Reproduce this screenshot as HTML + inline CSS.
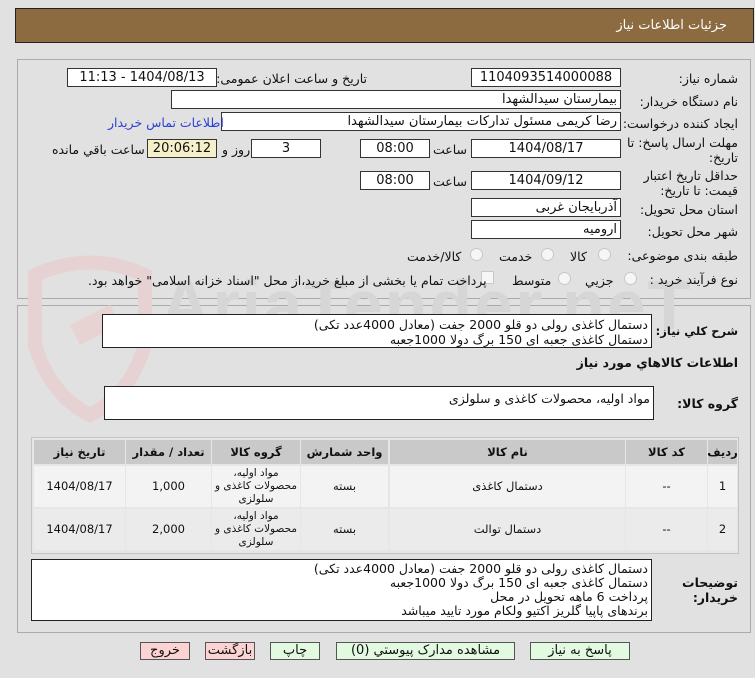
<!DOCTYPE html>
<html dir="rtl"><head><meta charset="utf-8">
<style>
*{box-sizing:border-box;margin:0;padding:0}
body{width:755px;height:678px;background:#e1e1e1;font-family:"DejaVu Sans","Liberation Sans",sans-serif;font-size:12px;color:#111;position:relative;overflow:hidden}
.a{position:absolute;white-space:nowrap}
.box{position:absolute;background:#fff;border:1px solid #333;height:19px;line-height:17px;text-align:center;font-size:13px}
.lbl{position:absolute;white-space:nowrap;font-size:12.5px;text-align:right}
.rad{position:absolute;width:13px;height:13px;border-radius:50%;border:1px solid #c8c8c8;background:#f6f6f6}
.btn{position:absolute;top:642px;height:18px;border:1px solid #555;font-size:13px;text-align:center;line-height:16px}
.c{position:absolute;display:flex;align-items:center;justify-content:center;text-align:center;font-size:11.5px;line-height:13px;background:#f3f3f3}
.h{background:#c9c9c9;font-weight:bold;font-size:11.5px}
.g{font-size:10.5px;line-height:13px}
.ta{position:absolute;background:#fff;border:1px solid #222;font-size:12.5px;padding:2px 3px;line-height:15px;text-align:right}
</style></head><body>
<div class="a" style="left:15px;top:8px;width:739px;height:35px;background:#8b6b3f;border:1px solid #222"></div>
<div class="a" style="right:28px;top:18px;color:#fff;font-size:13px">جزئیات اطلاعات نیاز</div>

<div class="a" style="left:17px;top:59px;width:734px;height:240px;border:1px solid #aaa"></div>
<div class="a" style="left:17px;top:305px;width:734px;height:328px;border:1px solid #aaa"></div>

<svg class="a" style="left:20px;top:245px" width="140" height="200" viewBox="0 0 140 200"><path d="M15 30 Q70 5 125 30 L125 100 Q110 150 70 170 Q30 150 15 100 Z" fill="none" stroke="#e6d2d2" stroke-width="14"/><path d="M50 80 L90 60 L100 80 L60 100 Z" fill="#e8d3d3"/></svg>
<div class="a" style="left:160px;top:265px;font-size:70px;font-weight:bold;color:#d6d6d6;direction:ltr;letter-spacing:2px;font-family:'Liberation Sans',sans-serif">AriaTender.neT</div>

<div class="lbl" style="right:17px;top:71px">شماره نیاز:</div>
<div class="box" style="left:471px;top:68px;width:150px">1104093514000088</div>
<div class="lbl" style="right:388px;top:71px">تاریخ و ساعت اعلان عمومی:</div>
<div class="box" style="left:67px;top:68px;width:150px">1404/08/13 - 11:13</div>

<div class="lbl" style="right:17px;top:94px">نام دستگاه خریدار:</div>
<div class="box" style="left:171px;top:90px;width:450px;text-align:right;padding-right:3px">بیمارستان سیدالشهدا</div>

<div class="lbl" style="right:17px;top:116px">ایجاد کننده درخواست:</div>
<div class="box" style="left:221px;top:112px;width:400px;text-align:right;padding-right:3px">رضا کریمی مسئول تدارکات بیمارستان سیدالشهدا</div>
<div class="lbl" style="left:108px;top:115px;color:#2b3fd6">اطلاعات تماس خریدار</div>

<div class="lbl" style="right:17px;top:135px;line-height:15px">مهلت ارسال پاسخ: تا<br>تاریخ:</div>
<div class="box" style="left:471px;top:139px;width:150px">1404/08/17</div>
<div class="lbl" style="left:433px;top:142px">ساعت</div>
<div class="box" style="left:360px;top:139px;width:70px">08:00</div>
<div class="box" style="left:251px;top:139px;width:70px">3</div>
<div class="lbl" style="left:222px;top:142px">روز و</div>
<div class="box" style="left:147px;top:139px;width:70px;background:#f5f0c8">20:06:12</div>
<div class="lbl" style="left:52px;top:142px">ساعت باقي مانده</div>

<div class="lbl" style="right:17px;top:168px;line-height:15px">حداقل تاریخ اعتبار<br>قیمت: تا تاریخ:</div>
<div class="box" style="left:471px;top:171px;width:150px">1404/09/12</div>
<div class="lbl" style="left:433px;top:174px">ساعت</div>
<div class="box" style="left:360px;top:171px;width:70px">08:00</div>

<div class="lbl" style="right:17px;top:202px">استان محل تحویل:</div>
<div class="box" style="left:471px;top:198px;width:150px;text-align:right;padding-right:3px">آذربایجان غربی</div>
<div class="lbl" style="right:17px;top:224px">شهر محل تحویل:</div>
<div class="box" style="left:471px;top:220px;width:150px;text-align:right;padding-right:3px">ارومیه</div>

<div class="lbl" style="right:17px;top:248px">طبقه بندی موضوعی:</div>
<div class="rad" style="left:598px;top:248px"></div><div class="lbl" style="left:570px;top:249px">کالا</div>
<div class="rad" style="left:541px;top:248px"></div><div class="lbl" style="left:499px;top:249px">خدمت</div>
<div class="rad" style="left:470px;top:248px"></div><div class="lbl" style="left:407px;top:249px">کالا/خدمت</div>

<div class="lbl" style="right:17px;top:272px">نوع فرآیند خرید :</div>
<div class="rad" style="left:624px;top:272px"></div><div class="lbl" style="left:585px;top:273px">جزیي</div>
<div class="rad" style="left:558px;top:272px"></div><div class="lbl" style="left:512px;top:273px">متوسط</div>
<div class="a" style="left:481px;top:271px;width:13px;height:13px;border:1px solid #c8c8c8;background:#f6f6f6"></div>
<div class="lbl" style="left:88px;top:273px">پرداخت تمام یا بخشی از مبلغ خرید،از محل "اسناد خزانه اسلامی" خواهد بود.</div>

<div class="lbl" style="right:17px;top:324px;font-weight:bold;font-size:11.5px">شرح کلي نياز:</div>
<div class="ta" style="left:102px;top:314px;width:550px;height:34px">دستمال کاغذی رولی دو قلو 2000 جفت (معادل 4000عدد تکی)<br>دستمال کاغذی جعبه ای 150 برگ دولا 1000جعبه</div>
<div class="lbl" style="right:17px;top:355px;font-weight:bold">اطلاعات کالاهاي مورد نياز</div>
<div class="lbl" style="right:17px;top:396px;font-weight:bold">گروه کالا:</div>
<div class="ta" style="left:104px;top:386px;width:550px;height:34px;padding-top:4px">مواد اولیه، محصولات کاغذی و سلولزی</div>

<div class="a" style="left:31px;top:437px;width:708px;height:117px;border:1px solid #c4c4c4;background:#e6e6e6"></div>
<div class="c h" style="left:708px;top:440px;width:29px;height:24px">رديف</div>
<div class="c h" style="left:626px;top:440px;width:81px;height:24px">کد کالا</div>
<div class="c h" style="left:390px;top:440px;width:235px;height:24px">نام کالا</div>
<div class="c h" style="left:301px;top:440px;width:87px;height:24px">واحد شمارش</div>
<div class="c h" style="left:212px;top:440px;width:88px;height:24px">گروه کالا</div>
<div class="c h" style="left:126px;top:440px;width:85px;height:24px">تعداد / مقدار</div>
<div class="c h" style="left:34px;top:440px;width:91px;height:24px">تاريخ نياز</div>
<div class="c" style="left:708px;top:466px;width:29px;height:41px">1</div>
<div class="c" style="left:626px;top:466px;width:81px;height:41px">--</div>
<div class="c" style="left:390px;top:466px;width:235px;height:41px">دستمال کاغذی</div>
<div class="c" style="left:301px;top:466px;width:87px;height:41px">بسته</div>
<div class="c g" style="left:212px;top:466px;width:88px;height:41px">مواد اولیه،<br>محصولات کاغذی و<br>سلولزی</div>
<div class="c" style="left:126px;top:466px;width:85px;height:41px">1,000</div>
<div class="c" style="left:34px;top:466px;width:91px;height:41px">1404/08/17</div>
<div class="c" style="left:708px;top:509px;width:29px;height:41px;background:#ebebeb">2</div>
<div class="c" style="left:626px;top:509px;width:81px;height:41px;background:#ebebeb">--</div>
<div class="c" style="left:390px;top:509px;width:235px;height:41px;background:#ebebeb">دستمال توالت</div>
<div class="c" style="left:301px;top:509px;width:87px;height:41px;background:#ebebeb">بسته</div>
<div class="c g" style="left:212px;top:509px;width:88px;height:41px;background:#ebebeb">مواد اولیه،<br>محصولات کاغذی و<br>سلولزی</div>
<div class="c" style="left:126px;top:509px;width:85px;height:41px;background:#ebebeb">2,000</div>
<div class="c" style="left:34px;top:509px;width:91px;height:41px;background:#ebebeb">1404/08/17</div>

<div class="lbl" style="right:17px;top:575px;font-weight:bold;line-height:15px">توضیحات<br>خریدار:</div>
<div class="ta" style="left:31px;top:559px;width:621px;height:62px;line-height:14px">دستمال کاغذی رولی دو قلو 2000 جفت (معادل 4000عدد تکی)<br>دستمال کاغذی جعبه ای 150 برگ دولا 1000جعبه<br>پرداخت 6 ماهه تحویل در محل<br>برندهای پاپیا گلریز اکتیو ولکام مورد تایید میباشد</div>

<div class="btn" style="left:530px;width:100px;background:#e2fbe0">پاسخ به نیاز</div>
<div class="btn" style="left:336px;width:179px;background:#e2fbe0">مشاهده مدارک پیوستي (0)</div>
<div class="btn" style="left:270px;width:50px;background:#e2fbe0">چاپ</div>
<div class="btn" style="left:205px;width:50px;background:#fcd3d3">بازگشت</div>
<div class="btn" style="left:140px;width:50px;background:#fcd3d3">خروج</div>
</body></html>
